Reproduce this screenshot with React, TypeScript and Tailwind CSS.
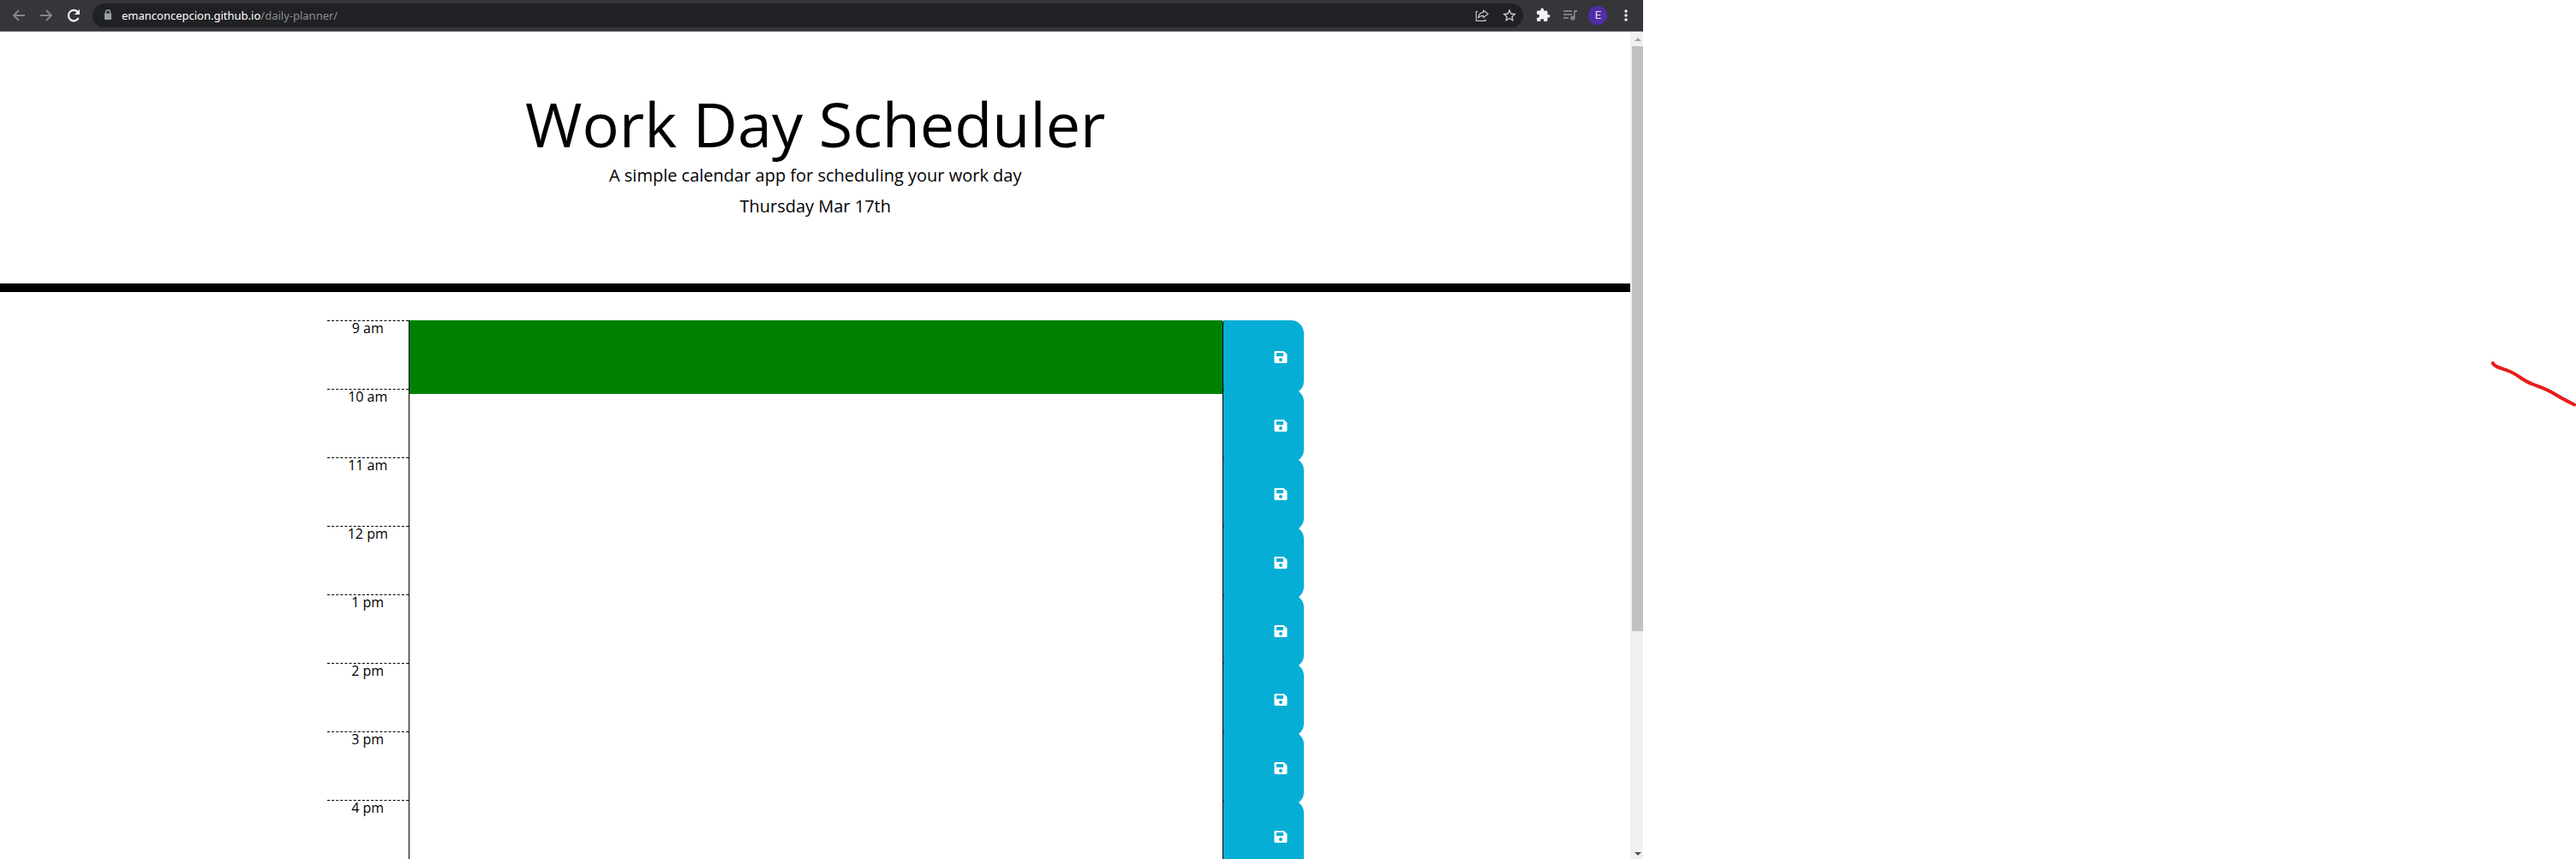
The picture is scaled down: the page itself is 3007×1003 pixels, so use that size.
import React from "react";

const hours = ["9 am", "10 am", "11 am", "12 pm", "1 pm", "2 pm", "3 pm", "4 pm"];

function SaveIcon() {
  return (
    <svg viewBox="0 0 16 14" className="h-[14px] w-4" aria-hidden="true">
      <path
        fillRule="evenodd"
        fill="#fff"
        d="M1.5 0H11.5L15.5 3.5V12.5A1.5 1.5 0 0 1 14 14H2A1.5 1.5 0 0 1 .5 12.5V1A1 1 0 0 1 1.5 0ZM3 2V6H11V2ZM8 8A2 2 0 1 0 8 12A2 2 0 1 0 8 8Z"
      />
    </svg>
  );
}

function BrowserBar() {
  return (
    <div className="flex h-[37px] items-center border-b border-[#5f6368] bg-[#35363a] pl-3">
      <button aria-label="Back" className="flex w-5 justify-center">
        <svg width="16" height="16" viewBox="0 0 16 16" fill="none" stroke="#85878a" strokeWidth="1.8">
          <path d="M15 8H2M8 2L2 8L8 14" />
        </svg>
      </button>
      <button aria-label="Forward" className="ml-3 flex w-5 justify-center">
        <svg width="16" height="16" viewBox="0 0 16 16" fill="none" stroke="#85878a" strokeWidth="1.8">
          <path d="M1 8H14M8 2L14 8L8 14" />
        </svg>
      </button>
      <button aria-label="Reload" className="ml-3 flex w-5 justify-center">
        <svg width="16" height="16" viewBox="0 0 16 16" fill="none">
          <path d="M13.6 11A6.2 6.2 0 1 1 12.6 3.8" stroke="#f1f3f4" strokeWidth="2.2" />
          <path d="M15 .8V7H8.8Z" fill="#f1f3f4" />
        </svg>
      </button>
      <div className="ml-3 flex h-7 min-w-0 flex-1 items-center rounded-full bg-[#202124] pr-2 pl-3">
        <svg width="12" height="14" viewBox="0 0 12 14" className="shrink-0" aria-hidden="true">
          <path d="M3.4 5V3.4A2.6 2.6 0 0 1 8.6 3.4V5" fill="none" stroke="#9aa0a6" strokeWidth="1.4" />
          <rect x="2" y="4.6" width="8" height="7.4" rx=".8" fill="#9aa0a6" />
        </svg>
        <a
          href="#planner"
          className="ml-[10px] flex-1 truncate font-['Noto_Sans',sans-serif] text-[13px] leading-5 text-[#8b8d90]"
        >
          <span className="text-white">emanconcepcion.github.io</span>/daily-planner/
        </a>
        <button aria-label="Share">
          <svg width="16" height="16" viewBox="0 0 16 16" fill="none" stroke="#c4c6c9" strokeWidth="1.2">
            <path d="M3 3.5H1.2V14.4H12V12.5" />
            <path d="M9.5 2L15 6.3L9.5 10.6V8.3C6.8 8.2 5 9 3.6 11C4 7.3 6 4.8 9.5 4.4Z" strokeLinejoin="round" />
          </svg>
        </button>
        <button aria-label="Bookmark" className="ml-4">
          <svg width="16" height="16" viewBox="0 0 16 16" fill="none" stroke="#c4c6c9" strokeWidth="1.4">
            <path d="M8 2L9.8 6L14.2 6.5L11 9.4L11.9 13.7L8 11.5L4.1 13.7L5 9.4L1.8 6.5L6.2 6Z" />
          </svg>
        </button>
      </div>
      <div className="flex items-center pr-3 pl-3">
        <button aria-label="Extensions">
          <svg width="20" height="20" viewBox="0 0 24 24" fill="#f1f3f4">
            <path d="M20.5 11H19V7c0-1.1-.9-2-2-2h-4V3.5a2.5 2.5 0 0 0-5 0V5H4c-1.1 0-2 .9-2 2v3.8h1.5a2.7 2.7 0 0 1 0 5.400H2V20c0 1.100.9 2 2 2h3.800v-1.500a2.700 2.700 0 0 1 5.400 0V22H17c1.100 0 2-.9 2-2v-4h1.500a2.500 2.500 0 0 0 0-5z" transform="translate(3 1) scale(.88)" />
          </svg>
        </button>
        <button aria-label="Media controls" className="ml-[14px]">
          <svg width="18" height="16" viewBox="0 0 18 16" fill="#85878a">
            <path d="M1 2H11V3.700H1ZM1 6H11V7.700H1ZM1 10H7V11.700H1ZM13 2H17V4H14.600V11A2.700 2.700 0 1 1 13 8.700Z" />
          </svg>
        </button>
        <button
          aria-label="Profile"
          className="ml-3 flex size-[22px] items-center justify-center rounded-full bg-[#512da8] font-[Roboto,sans-serif] text-[13px] text-[#e6e0f2]"
        >
          E
        </button>
        <button aria-label="Menu" className="ml-[14px] flex w-4 justify-center">
          <svg width="4" height="14" viewBox="0 0 4 14" fill="#f1f3f4">
            <circle cx="2" cy="2" r="1.700" />
            <circle cx="2" cy="7" r="1.700" />
            <circle cx="2" cy="12" r="1.700" />
          </svg>
        </button>
      </div>
    </div>
  );
}

function Scrollbar() {
  return (
    <div className="flex w-[15px] shrink-0 flex-col bg-[#f0f0f0] pl-0.5" aria-hidden="true">
      <div className="flex h-[17px] items-center justify-center">
        <svg width="8" height="4" viewBox="0 0 8 4" fill="#a3a3a3">
          <path d="M0 4L4 0L8 4Z" />
        </svg>
      </div>
      <div className="h-[683px] bg-[#c1c1c1]" />
      <div className="flex flex-1 items-end justify-center pb-1">
        <svg width="8" height="4" viewBox="0 0 8 4" fill="#505050">
          <path d="M0 0L4 4L8 0Z" />
        </svg>
      </div>
    </div>
  );
}

function HourRow({ label, index }: { label: string; index: number }) {
  return (
    <div className="flex h-20">
      <label
        htmlFor={`hour-${index}`}
        className="w-1/12 border-t border-dashed border-black text-center text-base leading-4"
      >
        {label}
      </label>
      <textarea
        id={`hour-${index}`}
        className={`block h-[86px] w-10/12 resize-none border-l border-black p-1 text-white outline-none ${
          index === 0 ? "relative bg-[#008000]" : ""
        }`}
      />
      <button
        aria-label={`Save ${label}`}
        className="relative flex h-[86px] w-1/12 items-center justify-end rounded-l-[3px] rounded-r-[15px] border-l border-black bg-[#06aed5] pr-[19px]"
      >
        <SaveIcon />
      </button>
    </div>
  );
}

export default function App() {
  return (
    <div className="h-screen overflow-hidden bg-white font-['Open_Sans',sans-serif] text-black">
      <div className="flex h-full">
        <div className="flex w-[63.8%] flex-col">
          <BrowserBar />
          <div className="flex min-h-0 flex-1">
            <div id="planner" className="min-w-0 flex-1 overflow-hidden">
              <header className="border-b-[10px] border-black px-4 pt-[68px] pb-[72px] text-center">
                <h1 className="mb-1 text-[72px] leading-[78px]">Work Day Scheduler</h1>
                <p className="text-xl leading-9">A simple calendar app for scheduling your work day</p>
                <p className="text-xl leading-9">Thursday Mar 17th</p>
              </header>
              <main className="mx-auto mt-[33px] max-w-[1140px]">
                {hours.map((h, i) => (
                  <HourRow key={h} label={h} index={i} />
                ))}
              </main>
            </div>
            <Scrollbar />
          </div>
        </div>
        <div className="flex flex-1 items-start justify-end pt-[422px]">
          <svg width="99" height="54" viewBox="0 0 99 54" fill="none" aria-hidden="true">
            <path
              d="M2 2C3 6 12 8 20 11C31 15 36 22 47 26C57 30 65 32 74 38C82 43 90 47 97 50.500"
              stroke="#e81c1c"
              strokeWidth="4"
              strokeLinecap="round"
            />
          </svg>
        </div>
      </div>
    </div>
  );
}
